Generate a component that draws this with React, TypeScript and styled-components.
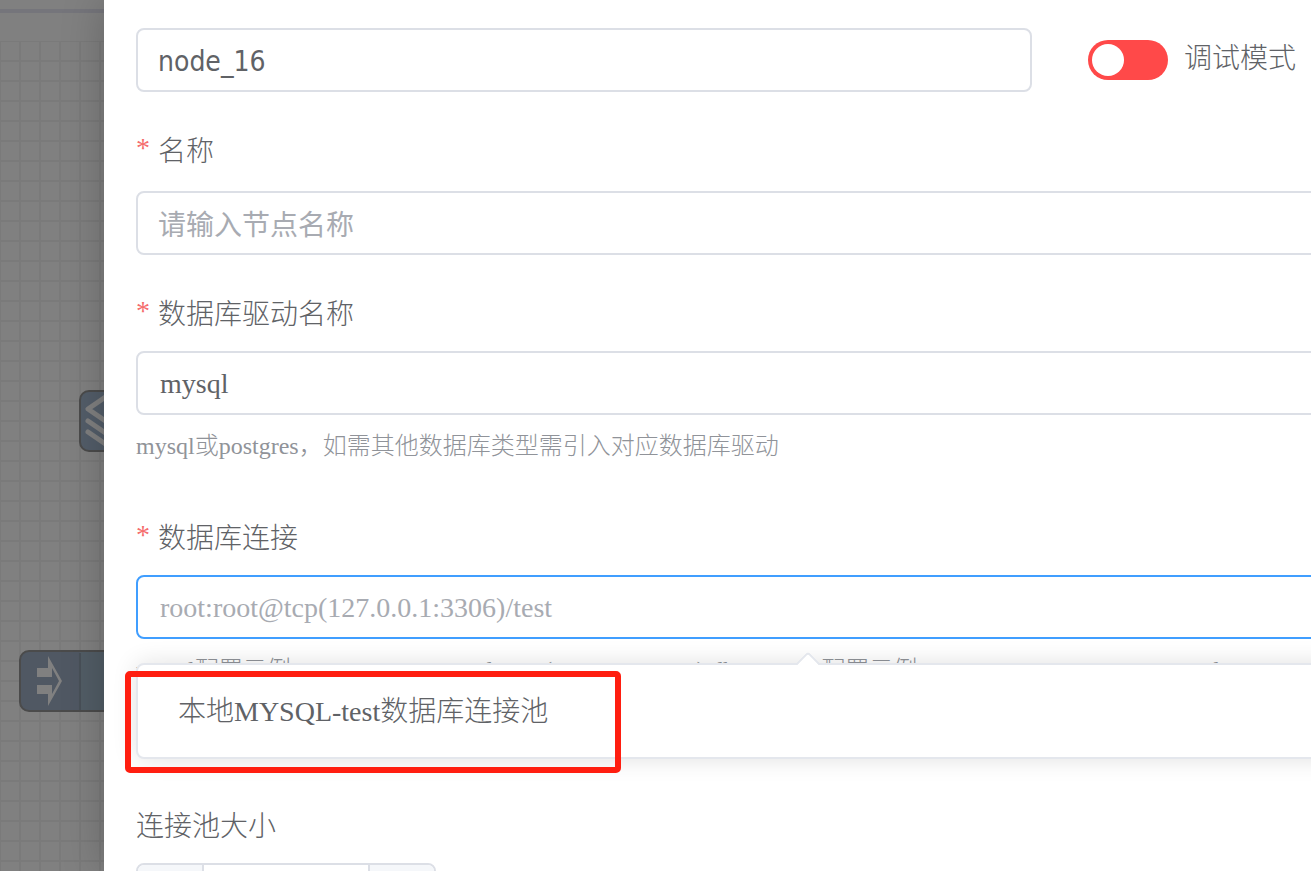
import React from 'react';
import styled, { createGlobalStyle, css } from 'styled-components';

const serif = "'Liberation Serif', 'Noto Sans CJK SC', serif";
const sans = "'DejaVu Sans Condensed', 'Noto Sans CJK SC', sans-serif";

const GlobalStyle = createGlobalStyle`
  *, *::before, *::after { box-sizing: border-box; }
  html, body, #root { height: 100%; }
  body {
    margin: 0;
    overflow: hidden;
    background: #808080;
    color: #606266;
    font-family: ${serif};
    font-size: 28px;
    font-weight: 300;
  }
`;

const Page = styled.div`
  display: flex;
  height: 100vh;
  overflow: hidden;
`;

const Backdrop = styled.aside`
  position: relative;
  flex: 0 0 104px;
  display: flex;
  flex-direction: column;
  overflow: hidden;
`;

const TopBar = styled.div`
  height: 41px;
  padding-top: 9px;

  &::before {
    content: '';
    display: block;
    height: 4px;
    background: #75757b;
  }
`;

const Canvas = styled.svg`
  display: block;
  flex: 1;
  width: 100%;
`;

const Drawer = styled.main`
  flex: 1;
  min-width: 0;
  z-index: 1;
  padding: 28px 0 0 32px;
  background: #fff;
  box-shadow: 0 0 40px rgba(0, 0, 0, 0.22);
`;

const Form = styled.form`
  margin-right: -169px;
`;

const Field = styled.div<{ $gap: number }>`
  position: relative;
  display: flex;
  flex-direction: column;
  margin-bottom: ${(p) => p.$gap}px;
`;

const HeadRow = styled.div`
  display: flex;
  align-items: center;
  margin-bottom: 36px;
`;

const Label = styled.label<{ $required?: boolean; $space: number }>`
  display: flex;
  height: 44px;
  line-height: 48px;
  margin-bottom: ${(p) => p.$space}px;

  ${(p) =>
    p.$required &&
    css`
      &::before {
        content: '*';
        width: 22px;
        color: #f56c6c;
        font-weight: 400;
        line-height: 40px;
      }
    `}
`;

const TextInput = styled.input<{ $sans?: boolean; $focused?: boolean }>`
  width: 100%;
  height: 64px;
  padding: 2px 22px 0;
  border: 2px solid ${(p) => (p.$focused ? '#409eff' : '#dcdfe6')};
  border-radius: 8px;
  outline: none;
  background: #fff;
  color: #606266;
  font-family: ${(p) => (p.$sans ? sans : serif)};
  font-size: 28px;
  font-weight: ${(p) => (p.$sans ? 400 : 300)};

  &::placeholder {
    color: #a8abb2;
    opacity: 1;
  }
`;

const NodeIdInput = styled(TextInput)`
  width: 896px;
  padding: 2px 20px 0;
`;

const NameInput = styled(TextInput)`
  padding: 4px 20px 0;
`;

const SwitchLabel = styled.label`
  display: flex;
  align-items: center;
  gap: 16px;
  margin-left: 56px;
  white-space: nowrap;
`;

const SwitchText = styled.span`
  padding-bottom: 8px;
`;

const Switch = styled.input`
  appearance: none;
  width: 80px;
  height: 40px;
  margin: 0;
  padding: 4px;
  border-radius: 20px;
  background: #ff4949;

  &::before {
    content: '';
    display: block;
    width: 32px;
    height: 32px;
    border-radius: 50%;
    background: #fff;
  }

  &:checked::before {
    margin-left: auto;
  }
`;

const Hint = styled.p`
  margin: 8px 0 0;
  color: #909399;
  font-size: 24px;
  line-height: 46px;
  white-space: nowrap;
`;

const Popover = styled.div`
  position: absolute;
  top: 148px;
  left: 0;
  right: 0;
  z-index: 2;
  padding: 10px 0 14px;
  border: 2px solid #e4e7ed;
  border-radius: 8px;
  background: #fff;
  box-shadow: 0 0 24px rgba(0, 0, 0, 0.12);
`;

const Arrow = styled.span`
  position: absolute;
  top: -10px;
  left: calc(50% - 9px);
  width: 18px;
  height: 18px;
  border: solid #e4e7ed;
  border-width: 2px 0 0 2px;
  border-top-left-radius: 4px;
  background: linear-gradient(135deg, #fff 60%, transparent 60%);
  transform: rotate(45deg);
`;

const Option = styled.button`
  display: block;
  width: 100%;
  height: 68px;
  padding: 0 40px;
  border: 0;
  background: transparent;
  color: #606266;
  font: inherit;
  text-align: left;
`;

const Highlight = styled.div`
  position: absolute;
  top: 6px;
  left: -13px;
  width: 496px;
  height: 102px;
  border: 6px solid #ff1e10;
  border-radius: 5px;
  pointer-events: none;
`;

const Stepper = styled.div`
  display: flex;
  width: 300px;
  height: 64px;
  border: 2px solid #dcdfe6;
  border-radius: 8px;
  overflow: hidden;
`;

const StepButton = styled.button`
  flex: 0 0 64px;
  border: 0;
  background: #f5f7fa;
  color: #606266;
  font: inherit;
`;

const StepValue = styled.input`
  flex: 1;
  min-width: 0;
  border: solid #dcdfe6;
  border-width: 0 2px;
  color: #606266;
  font: inherit;
  text-align: center;
`;

function FlowCanvas() {
  return (
    <Canvas aria-hidden="true">
      <defs>
        <pattern id="grid" x="-1" y="-1" width="20" height="20" patternUnits="userSpaceOnUse">
          <path d="M0 0H20V2H2V20H0Z" fill="#7a7a7a" />
        </pattern>
      </defs>
      <rect width="100%" height="100%" fill="url(#grid)" />
      <g>
        <rect x="80" y="350" width="200" height="60" rx="9" fill="#535d69" stroke="#4b4b4b" strokeWidth="2" />
        <g fill="none" stroke="#808080" strokeWidth="5" strokeLinecap="round" strokeLinejoin="round">
          <path d="M110 353L88 368L110 383" />
          <path d="M88 380L110 395" />
          <path d="M88 391L110 406" />
        </g>
      </g>
      <g>
        <rect x="20" y="610" width="200" height="60" rx="9" fill="#525d66" />
        <path d="M80 610H29Q20 610 20 619V661Q20 670 29 670H80Z" fill="#505863" />
        <rect x="20" y="610" width="200" height="60" rx="9" fill="none" stroke="#4b4b4b" strokeWidth="2" />
        <path d="M80 612V669" stroke="#485058" strokeWidth="2" />
        <path d="M37 627H48V615L62 640L48 665V653H37V644H52V653L59 640L52 627V636H37Z" fill="#808080" />
      </g>
    </Canvas>
  );
}

export default function App() {
  return (
    <>
      <GlobalStyle />
      <Page>
        <Backdrop>
          <TopBar />
          <FlowCanvas />
        </Backdrop>
        <Drawer>
          <Form>
            <HeadRow>
              <NodeIdInput $sans aria-label="ID" defaultValue="node_16" />
              <SwitchLabel>
                <Switch type="checkbox" role="switch" />
                <SwitchText>调试模式</SwitchText>
              </SwitchLabel>
            </HeadRow>
            <Field $gap={36}>
              <Label $required $space={19} htmlFor="name">名称</Label>
              <NameInput $sans id="name" placeholder="请输入节点名称" />
            </Field>
            <Field $gap={46}>
              <Label $required $space={16} htmlFor="driver">数据库驱动名称</Label>
              <TextInput id="driver" defaultValue="mysql" />
              <Hint>mysql或postgres，如需其他数据库类型需引入对应数据库驱动</Hint>
            </Field>
            <Field $gap={110}>
              <Label $required $space={16} htmlFor="dsn">数据库连接</Label>
              <TextInput $focused id="dsn" placeholder="root:root@tcp(127.0.0.1:3306)/test" />
              <Hint>
                mysql配置示例: username:password@tcp(127.0.0.1:3306)/db postgres配置示例: postgres://username:password@127.0.0.1:5432/db
              </Hint>
              <Popover>
                <Arrow />
                <Option type="button">本地MYSQL-test数据库连接池</Option>
                <Highlight />
              </Popover>
            </Field>
            <Field $gap={0}>
              <Label $space={16} htmlFor="pool">连接池大小</Label>
              <Stepper>
                <StepButton type="button" aria-label="减少" />
                <StepValue id="pool" />
                <StepButton type="button" aria-label="增加" />
              </Stepper>
            </Field>
          </Form>
        </Drawer>
      </Page>
    </>
  );
}
